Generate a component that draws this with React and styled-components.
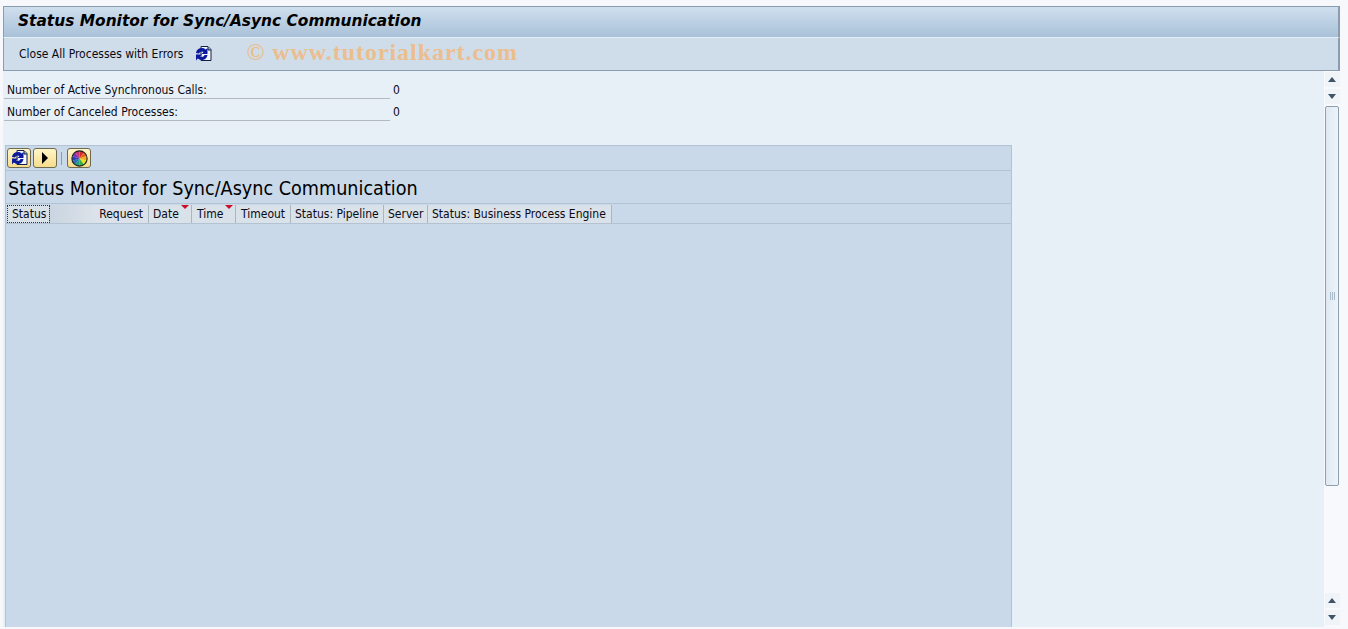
import React from 'react';
import styled, { createGlobalStyle } from 'styled-components';

const GlobalStyle = createGlobalStyle`
    html, body {
        margin: 0;
        padding: 0;
        height: 100%;
        overflow: hidden;
        background: #f6f8fc;
    }
    body {
        font-family: "DejaVu Sans Condensed", "Noto Sans", sans-serif;
        font-size: 12px;
        color: #0a0a14;
    }
`;

const Page = styled.div`
    width: 1348px;
    height: 629px;
    padding: 6px 8px 2px 3px;
    box-sizing: border-box;
    display: flex;
    flex-direction: column;
`;

const TitleBar = styled.div`
    height: 31px;
    box-sizing: border-box;
    flex: none;
    padding: 0 0 2px 14px;
    display: flex;
    align-items: center;
    border: 1px solid #8b9cae;
    border-bottom: none;
    border-right-width: 2px;
    background: linear-gradient(#cfdfee, #a9c1d8);
`;

const Title = styled.h1`
    margin: 0;
    font-family: "DejaVu Sans", sans-serif;
    font-size: 15.42px;
    font-weight: 700;
    font-style: italic;
    color: #000;
`;

const Toolbar = styled.div`
    height: 34px;
    flex: none;
    box-sizing: border-box;
    padding: 0 0 1px 15px;
    display: flex;
    align-items: center;
    background: #cedde9;
    border: 1px solid #8b9cae;
    border-top: 1px solid #e3edf5;
    border-right-width: 2px;
`;

const ToolbarLabel = styled.span`
    font-size: 12px;
`;

const ToolbarIcon = styled.span`
    display: flex;
    margin-left: 12px;
`;

const Watermark = styled.span`
    margin: 0 0 2px 34px;
    font-family: "Liberation Serif", serif;
    font-size: 24px;
    font-weight: 700;
    letter-spacing: 0.95px;
    color: #ecbd8e;
    white-space: nowrap;
`;

const Main = styled.div`
    flex: 1;
    min-height: 0;
    display: flex;
`;

const Content = styled.div`
    flex: 1;
    min-width: 0;
    background: #e8f0f7;
    padding: 8px 0 0 1px;
    display: flex;
    flex-direction: column;
`;

const FieldRow = styled.div`
    display: flex;
    height: 22px;
    flex: none;
`;

const FieldLabel = styled.div`
    width: 386px;
    box-sizing: border-box;
    padding-left: 3px;
    font-size: 12px;
    line-height: 23px;
    border-bottom: 1px solid #b4b9be;
    height: 20px;
`;

const FieldValue = styled.div`
    margin-left: 3px;
    font-size: 12px;
    line-height: 23px;
`;

const Panel = styled.section`
    width: 1007px;
    margin: 22px 0 0 1px;
    flex: 1;
    min-height: 0;
    box-sizing: border-box;
    background: #c9d9e9;
    border: 1px solid #b3c3d3;
    border-bottom: none;
    display: flex;
    flex-direction: column;
`;

const GridToolbar = styled.div`
    height: 25px;
    flex: none;
    box-sizing: border-box;
    padding: 2px 0 0 1px;
    display: flex;
    align-items: flex-start;
    gap: 2px;
    border-bottom: 1px solid #b3c3d3;
`;

const ToolButton = styled.button`
    width: 24px;
    height: 20px;
    padding: 0;
    display: flex;
    align-items: center;
    justify-content: center;
    box-sizing: border-box;
    border: 1px solid #6f6a4e;
    border-radius: 3px;
    background: linear-gradient(#fff6c8, #f6dc8c);
`;

const ToolSeparator = styled.span`
    width: 1px;
    height: 13px;
    margin: 4px 3px 0 2px;
    background: #8b9cae;
`;

const GridTitle = styled.h2`
    margin: 0;
    height: 33px;
    flex: none;
    box-sizing: border-box;
    padding-left: 2px;
    font-family: "DejaVu Sans Condensed", "Noto Sans", sans-serif;
    font-size: 19.6px;
    font-weight: 400;
    line-height: 36px;
    color: #000;
    border-bottom: 1px solid #b3c3d3;
`;

const HeaderRow = styled.div`
    height: 20px;
    flex: none;
    box-sizing: border-box;
    display: flex;
    padding: 1px 0 0 1px;
    border-bottom: 1px solid #b3c3d3;
`;

const HeaderCell = styled.div`
    position: relative;
    width: ${p => p.$width}px;
    box-sizing: border-box;
    padding: 0 5px 0 ${p => (p.$inset ? 5 : 4)}px;
    font-size: 12px;
    line-height: 19px;
    text-align: ${p => (p.$right ? 'right' : 'left')};
    white-space: nowrap;
    background: ${p => (p.$right ? 'linear-gradient(90deg, #c9d5e1, #dbe2e9 45%)' : '#d9e1e9')};
    border-right: 1px solid #aab6c2;
    outline: ${p => (p.$focused ? '1px dotted #333' : 'none')};
    outline-offset: -1px;
`;

const SortMark = styled.span`
    position: absolute;
    top: 0;
    right: 2px;
    width: 0;
    height: 0;
    border-left: 4px solid transparent;
    border-right: 4px solid transparent;
    border-top: 4px solid #c8102e;
`;

const Scrollbar = styled.div`
    width: 16px;
    flex: none;
    display: flex;
    flex-direction: column;
    align-items: center;
    background: #f7f9fc;
    padding: 1px 0 0;
    box-sizing: border-box;
`;

const ScrollButton = styled.div`
    width: 15px;
    height: 15px;
    flex: none;
    display: flex;
    align-items: center;
    justify-content: center;
    margin-bottom: 2px;
    background: #f0f4f9;
`;

const Arrow = styled.span`
    width: 0;
    height: 0;
    border-left: 4.5px solid transparent;
    border-right: 4.5px solid transparent;
    ${p => (p.$up ? 'border-bottom: 5px solid #3f5468;' : 'border-top: 5px solid #3f5468;')}
`;

const ScrollThumb = styled.div`
    width: 14px;
    height: 380px;
    flex: none;
    box-sizing: border-box;
    border: 1px solid #8f9fae;
    border-radius: 2px;
    background: linear-gradient(90deg, #dfe9f2, #edf3f9);
    display: flex;
    align-items: center;
    justify-content: center;
`;

const Grip = styled.span`
    width: 5px;
    height: 8px;
    background: repeating-linear-gradient(90deg, #aab9c8 0 1px, transparent 1px 2px);
`;

const ScrollSpacer = styled.div`
    flex: 1;
`;

const RefreshIcon = () => (
    <svg width="17" height="16" viewBox="0 0 17 16">
        <path d="M6 .5h7l3 3v11H6z" fill="#f4f8fc" stroke="#10204a" />
        <path d="M13 1v3h3" fill="#9fb6d2" stroke="#10204a" />
        <path d="M1 7a6 6 0 0 1 9.800-3.600L12.500 2v6H6.500l2-2A3 3 0 0 0 4 7.500z" fill="#0b1a9c" />
        <path d="M12.500 9a6 6 0 0 1-9.800 3.600L1 14.500V8.500h6l-2 2A3 3 0 0 0 9.500 9z" fill="#0b1a9c" />
    </svg>
);

const PlayIcon = () => (
    <svg width="8" height="12" viewBox="0 0 8 12">
        <path d="M1 0l6 6-6 6z" fill="#000" />
    </svg>
);

const WHEEL_COLORS = ['#d22d2d', '#e8641c', '#f0b020', '#e8e02a', '#3bb04a', '#1f9f80', '#2a6fc0', '#2a3fc0', '#7a35b0', '#c8307c'];

// pie slices for the colour settings icon
const slicePath = i => {
    const a = (i / WHEEL_COLORS.length) * 2 * Math.PI;
    const b = ((i + 1) / WHEEL_COLORS.length) * 2 * Math.PI;
    const p = ang => `${(8 + 7 * Math.sin(ang)).toFixed(2)} ${(8 - 7 * Math.cos(ang)).toFixed(2)}`;
    return `M8 8L${p(a)}A7 7 0 0 1 ${p(b)}Z`;
};

const WheelIcon = () => (
    <svg width="17" height="17" viewBox="0 0 16 16">
        {WHEEL_COLORS.map((c, i) => <path key={c} d={slicePath(i)} fill={c} />)}
        <circle cx="8" cy="8" r="7.200" fill="none" stroke="#1c1c1c" strokeWidth="1" />
    </svg>
);

const COLUMNS = [
    { name: 'Status', width: 43, focused: true, inset: true },
    { name: 'Request', width: 99, right: true },
    { name: 'Date', width: 43, sorted: true },
    { name: 'Time', width: 44, sorted: true, inset: true },
    { name: 'Timeout', width: 55, inset: true },
    { name: 'Status: Pipeline', width: 93 },
    { name: 'Server', width: 44 },
    { name: 'Status: Business Process Engine', width: 184 },
];

const App = () => (
    <Page>
        <GlobalStyle />
        <TitleBar>
            <Title>Status Monitor for Sync/Async Communication</Title>
        </TitleBar>
        <Toolbar>
            <ToolbarLabel>Close All Processes with Errors</ToolbarLabel>
            <ToolbarIcon><RefreshIcon /></ToolbarIcon>
            <Watermark>© www.tutorialkart.com</Watermark>
        </Toolbar>
        <Main>
            <Content>
                <FieldRow>
                    <FieldLabel>Number of Active Synchronous Calls:</FieldLabel>
                    <FieldValue>0</FieldValue>
                </FieldRow>
                <FieldRow>
                    <FieldLabel>Number of Canceled Processes:</FieldLabel>
                    <FieldValue>0</FieldValue>
                </FieldRow>
                <Panel>
                    <GridToolbar>
                        <ToolButton><RefreshIcon /></ToolButton>
                        <ToolButton><PlayIcon /></ToolButton>
                        <ToolSeparator />
                        <ToolButton><WheelIcon /></ToolButton>
                    </GridToolbar>
                    <GridTitle>Status Monitor for Sync/Async Communication</GridTitle>
                    <HeaderRow>
                        {COLUMNS.map(col => (
                            <HeaderCell key={col.name} $width={col.width} $right={col.right} $focused={col.focused} $inset={col.inset}>
                                {col.name}
                                {col.sorted && <SortMark />}
                            </HeaderCell>
                        ))}
                    </HeaderRow>
                </Panel>
            </Content>
            <Scrollbar>
                <ScrollButton><Arrow $up /></ScrollButton>
                <ScrollButton><Arrow /></ScrollButton>
                <ScrollThumb><Grip /></ScrollThumb>
                <ScrollSpacer />
                <ScrollButton><Arrow $up /></ScrollButton>
                <ScrollButton><Arrow /></ScrollButton>
            </Scrollbar>
        </Main>
    </Page>
);

export default App;
